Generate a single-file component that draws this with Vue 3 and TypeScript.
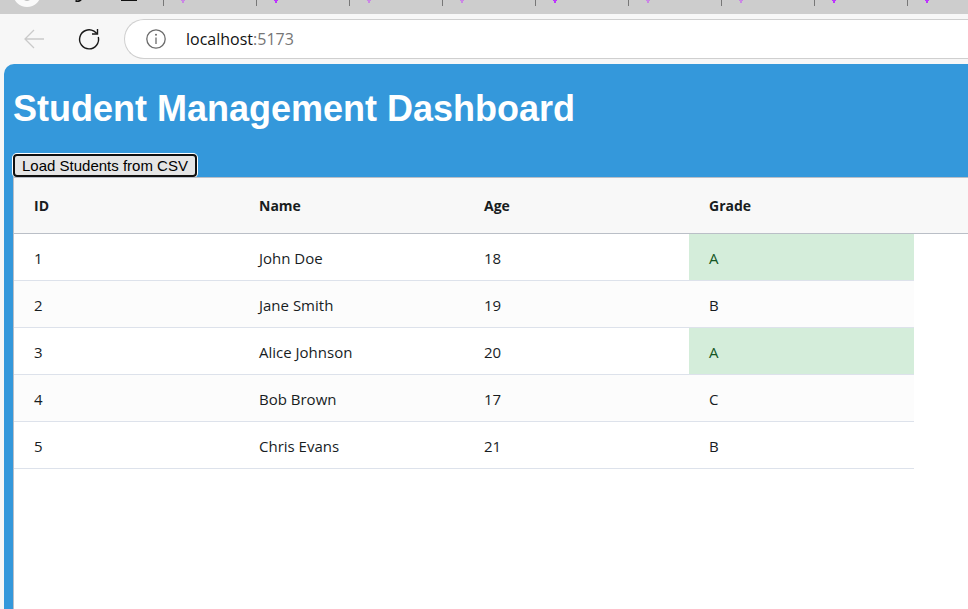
<script setup lang="ts">
import { ref } from 'vue'

interface Student {
  id: number
  name: string
  age: number
  grade: string
}

const columns: string[] = ['ID', 'Name', 'Age', 'Grade']

const loadStudents = (): Student[] => [
  { id: 1, name: 'John Doe', age: 18, grade: 'A' },
  { id: 2, name: 'Jane Smith', age: 19, grade: 'B' },
  { id: 3, name: 'Alice Johnson', age: 20, grade: 'A' },
  { id: 4, name: 'Bob Brown', age: 17, grade: 'C' },
  { id: 5, name: 'Chris Evans', age: 21, grade: 'B' },
]

const students = ref<Student[]>(loadStudents())

// true marks a tab whose icon is shown at full strength
const tabs: boolean[] = [false, true, false, false, true, false, false, true, true]

function reload(): void {
  students.value = loadStudents()
}
</script>

<template>
  <div class="browser">
    <div class="tab-strip">
      <svg class="strip-icons" viewBox="0 0 163 14" aria-hidden="true">
        <circle cx="27" cy="-7" r="14" fill="#fafafa" />
        <path d="M22.500 -1Q27 2.500 31.500 -1Z" fill="#a8a8a8" />
        <path d="M75.500 0.500Q77.500 2 80 0.500L83 -2" fill="none" stroke="#111" stroke-width="1.600" />
        <path d="M121 0.300H137" stroke="#111" stroke-width="1.400" />
      </svg>
      <div v-for="(bright, i) in tabs" :key="i" class="tab">
        <svg class="tab-icon" :class="{ bright }" viewBox="0 0 6 4" aria-hidden="true">
          <path d="M1 0H5V1H4V3H2V1H1Z" />
        </svg>
      </div>
    </div>

    <div class="toolbar">
      <button class="nav-button" type="button" aria-label="Back" disabled>
        <svg class="nav-icon" viewBox="0 0 24 24">
          <path d="M22 12H3M12 3L3 12L12 21" fill="none" stroke="#cacaca" stroke-width="1.300" />
        </svg>
      </button>
      <button class="nav-button" type="button" aria-label="Refresh">
        <svg class="nav-icon" viewBox="0 0 24 24">
          <path d="M21.300 10A9.500 9.500 0 1 1 17 4.200L20 6.500" fill="none" stroke="#191919" stroke-width="1.400" />
          <path d="M20.500 2V7H15" fill="none" stroke="#191919" stroke-width="1.400" />
        </svg>
      </button>
      <div class="address">
        <svg class="info-icon" viewBox="0 0 20 20" aria-hidden="true">
          <circle cx="10" cy="10" r="9.200" fill="none" stroke="#6b6b6b" stroke-width="1.300" />
          <path d="M10 8.500V15" stroke="#6b6b6b" stroke-width="1.300" />
          <circle cx="10" cy="5.800" r="1" fill="#6b6b6b" />
        </svg>
        <span class="url">localhost<span class="port">:5173</span></span>
      </div>
    </div>

    <main class="dashboard">
      <h1 class="title">Student Management Dashboard</h1>
      <button class="load-button" type="button" @click="reload">Load Students from CSV</button>
      <div class="grid-frame">
        <table class="grid">
          <colgroup>
            <col v-for="column in columns" :key="column" class="data-column" />
            <col />
          </colgroup>
          <thead>
            <tr>
              <th v-for="column in columns" :key="column" scope="col">{{ column }}</th>
              <td></td>
            </tr>
          </thead>
          <tbody>
            <tr v-for="student in students" :key="student.id">
              <td>{{ student.id }}</td>
              <td>{{ student.name }}</td>
              <td>{{ student.age }}</td>
              <td :class="{ top: student.grade === 'A' }">{{ student.grade }}</td>
            </tr>
          </tbody>
        </table>
      </div>
    </main>
  </div>
</template>

<style>
body {
  margin: 0;
  background: #f7f7f7;
}
</style>

<style scoped>
.browser {
  display: flex;
  flex-direction: column;
  min-height: 100vh;
  overflow: hidden;
  font-family: "Open Sans", "Noto Sans", sans-serif;
}

.tab-strip {
  display: flex;
  height: 14px;
  overflow: hidden;
  background: #cdcdcd;
}

.strip-icons {
  flex: none;
  width: 163px;
  height: 14px;
}

.tab {
  flex: 0 0 93px;
  box-sizing: border-box;
  height: 6px;
  padding-left: 16px;
  border-left: 1px solid #777;
}

.tab-icon {
  display: block;
  width: 6px;
  height: 4px;
  fill: #cb86e6;
}

.tab-icon.bright {
  fill: #bd34fe;
}

.toolbar {
  display: flex;
  align-items: center;
  height: 50px;
  background: #f7f7f7;
}

.nav-button {
  display: flex;
  flex: none;
  padding: 0;
  margin-left: 22px;
  border: 0;
  background: none;
}

.nav-button + .nav-button {
  margin-left: 31px;
}

.nav-icon {
  width: 24px;
  height: 24px;
}

.address {
  display: flex;
  flex: 1;
  align-items: center;
  box-sizing: border-box;
  height: 40px;
  margin-left: 23px;
  padding-left: 21px;
  gap: 20px;
  border: 1px solid #cfcfcf;
  border-right: 0;
  border-radius: 20px 0 0 20px;
  background: #fff;
}

.info-icon {
  flex: none;
  width: 20px;
  height: 20px;
}

.url {
  color: #111;
  font-size: 16px;
  line-height: 22px;
}

.port {
  color: #767676;
}

.dashboard {
  display: flex;
  flex: 1;
  flex-direction: column;
  align-items: flex-start;
  margin-left: 4px;
  padding-left: 9px;
  border-radius: 10px 0 0 0;
  background: #3498db;
}

.title {
  margin: 24px 0;
  color: #fff;
  font: bold 36px/42px "Liberation Sans", Arial, sans-serif;
  white-space: nowrap;
}

.load-button {
  padding: 1px 7px;
  border: 2px solid #101010;
  border-radius: 4px;
  box-shadow: 0 0 0 1px #fff;
  background: #e5e5e5;
  color: #000;
  font: 15px/17px "Liberation Sans", Arial, sans-serif;
  white-space: nowrap;
}

.grid-frame {
  flex: 1;
  align-self: stretch;
  border-top: 1px solid #babfc7;
  border-left: 1px solid #babfc7;
  background: #fff;
}

.grid {
  width: 100%;
  table-layout: fixed;
  border-collapse: separate;
  border-spacing: 0;
  color: #181d1f;
  font-size: 15px;
  line-height: 22px;
  text-align: left;
}

.data-column {
  width: 225px;
}

.grid th,
.grid td {
  box-sizing: border-box;
  height: 47px;
  padding: 2px 20px 0;
  border-bottom: 1px solid #dde2eb;
}

.grid thead th,
.grid thead td {
  height: 56px;
  padding-top: 0;
  border-bottom-color: #babfc7;
  background: #f8f8f8;
  font-size: 14px;
  font-weight: 700;
}

.grid tbody tr:nth-child(even) td {
  background: #fcfcfc;
}

.grid tbody .top {
  background: #d4edda;
  color: #155724;
}
</style>
